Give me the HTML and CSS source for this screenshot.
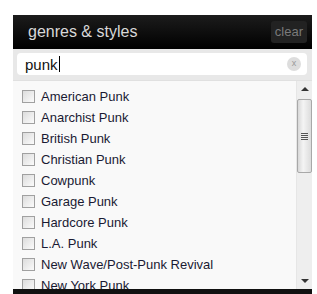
FILE: index.html
```html
<!DOCTYPE html>
<html>
<head>
  <meta charset="utf-8">
  <link rel="stylesheet" href="styles.css">
</head>
<body>
  <div class="panel">
    <div class="header">
      <span class="header-title">genres &amp; styles</span>
      <span class="clear-btn">clear</span>
    </div>
    <div class="search-bar">
      <div class="search-input">
        <span class="search-text">punk</span><span class="caret"></span>
        <span class="search-reset">x</span>
      </div>
    </div>
    <div class="list">
      <div class="items">
        <label class="item"><span class="check"></span>American Punk</label>
        <label class="item"><span class="check"></span>Anarchist Punk</label>
        <label class="item"><span class="check"></span>British Punk</label>
        <label class="item"><span class="check"></span>Christian Punk</label>
        <label class="item"><span class="check"></span>Cowpunk</label>
        <label class="item"><span class="check"></span>Garage Punk</label>
        <label class="item"><span class="check"></span>Hardcore Punk</label>
        <label class="item"><span class="check"></span>L.A. Punk</label>
        <label class="item"><span class="check"></span>New Wave/Post-Punk Revival</label>
        <label class="item"><span class="check"></span>New York Punk</label>
      </div>
      <div class="scrollbar">
        <div class="arrow arrow-up"></div>
        <div class="thumb">
          <span class="grip"></span>
        </div>
        <div class="track"></div>
        <div class="arrow arrow-down"></div>
      </div>
    </div>
    <div class="footer"></div>
  </div>
</body>
</html>
```

FILE: styles.css
```css
body {
  margin: 0;
  background: #fff;
  font-family: "Liberation Sans", Arial, sans-serif;
}
.panel {
  margin: 15px 0 0 13px;
  width: 299px;
  height: 279px;
  display: flex;
  flex-direction: column;
  background: #000;
  overflow: hidden;
}
.header {
  height: 34px;
  display: flex;
  align-items: center;
  justify-content: space-between;
  padding: 0 5px 0 15px;
  background: linear-gradient(#1c1c1c, #000);
}
.header-title {
  color: #d8d8d8;
  font-size: 16px;
}
.clear-btn {
  background: #222;
  color: #7a7a7a;
  font-size: 13px;
  border-radius: 3px;
  padding: 3px 4px 4px;
}
.search-bar {
  background: #e8e8e8;
  padding: 4px 5px 5px 4px;
}
.search-input {
  height: 22px;
  background: #fff;
  border-radius: 4px;
  display: flex;
  align-items: center;
  padding: 0 6px 0 8px;
}
.search-text {
  font-size: 15px;
  color: #111;
}
.caret {
  width: 1px;
  height: 16px;
  background: #000;
  margin-left: 1px;
}
.search-reset {
  margin-left: auto;
  width: 14px;
  height: 14px;
  border-radius: 50%;
  background: #ddd;
  color: #999;
  font-size: 9px;
  line-height: 13px;
  text-align: center;
}
.list {
  flex: 1;
  min-height: 0;
  display: flex;
  background: #f9f9f9;
  border-top: 1px solid #e0e0e0;
  overflow: hidden;
}
.items {
  flex: 1;
  padding: 5px 0 0 9px;
}
.item {
  display: flex;
  align-items: center;
  height: 21px;
  font-size: 13px;
  color: #1a1a33;
  white-space: nowrap;
}
.check {
  width: 11px;
  height: 11px;
  border: 1px solid #a0a0a0;
  background: linear-gradient(135deg, #dcdcdc, #fbfbfb);
  margin-right: 6px;
}
.scrollbar {
  width: 15px;
  display: flex;
  flex-direction: column;
  background: #eee;
  border-left: 1px solid #e6e6e6;
}
.arrow {
  height: 16px;
  display: flex;
  align-items: center;
  justify-content: center;
}
.arrow-up:before {
  content: "";
  border: 4px solid transparent;
  border-bottom: 4px solid #333;
  border-top: 0;
}
.arrow-down:before {
  content: "";
  border: 4px solid transparent;
  border-top: 4px solid #333;
  border-bottom: 0;
}
.thumb {
  height: 72px;
  margin: 2px 0 0 0;
  border: 1px solid #a8a8a8;
  border-radius: 2px;
  background: linear-gradient(to right, #d8d8d8, #f4f4f4 40%, #dcdcdc);
  display: flex;
  align-items: center;
  justify-content: center;
}
.grip {
  width: 7px;
  height: 7px;
  background: repeating-linear-gradient(#555 0 1px, transparent 1px 2px);
}
.track {
  flex: 1;
}
.footer {
  height: 5px;
  flex: none;
  background: #111;
}
```
